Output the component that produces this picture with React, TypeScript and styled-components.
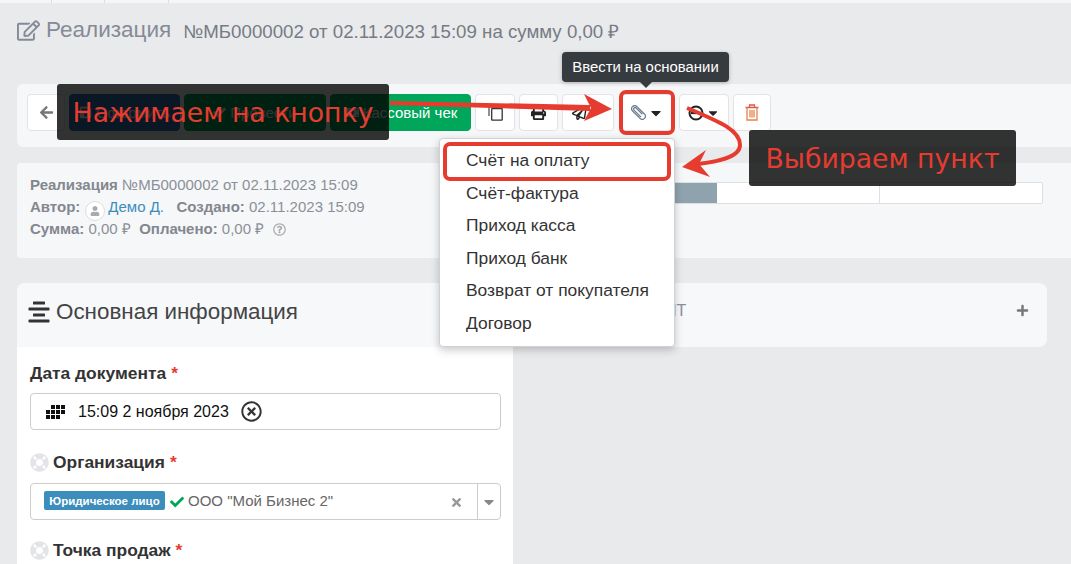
import React from 'react';
import styled, { createGlobalStyle } from 'styled-components';
import {
  FaArrowLeft, FaCaretDown, FaCheck, FaLifeRing, FaPlus, FaPrint, FaRegPaperPlane,
  FaRegEdit, FaRegQuestionCircle, FaRegTimesCircle, FaSave, FaTimes, FaUser, FaAlignCenter, FaMoneyBillAlt,
} from 'react-icons/fa';

const GlobalStyle = createGlobalStyle`
  html, body { margin: 0; padding: 0; background: #e9eaec; }
  body { font-family: "Liberation Sans", Arial, sans-serif; color: #333; }
`;

const Page = styled.div`
  position: relative;
  width: 1071px;
  height: 564px;
  overflow: hidden;
`;

const TopStrip = styled.div`
  display: flex;
  height: 3px;
  background: #f5f6f8;
`;

const TopTab = styled.div<{ $w: number }>`
  width: ${({ $w }) => $w}px;
  border-right: 1px solid #dcdde0;
`;

const Content = styled.div`
  padding-left: 17px;
`;

const Heading = styled.div`
  display: flex;
  align-items: center;
  height: 54px;
  color: #858a96;
  font-size: 22.5px;
  svg { font-size: 23px; margin-right: 6px; }
`;

const HeadingSub = styled.span`
  margin-left: 12px;
  font-size: 18.7px;
  color: #767b84;
`;

const Toolbar = styled.div`
  display: flex;
  align-items: center;
  gap: 4px;
  margin-top: 27px;
  height: 63px;
  padding: 0 0 6px 10px;
  box-sizing: border-box;
  background: #f6f7f9;
  border-radius: 6px 0 0 6px;
`;

const ToolButton = styled.div<{ $w: number; $bg?: string; $gap?: number }>`
  display: flex;
  align-items: center;
  justify-content: center;
  gap: ${({ $gap }) => $gap ?? 4}px;
  width: ${({ $w }) => $w}px;
  height: 37px;
  box-sizing: border-box;
  border-radius: 4px;
  font-size: 15px;
  background: ${({ $bg }) => $bg ?? '#fff'};
  color: ${({ $bg }) => ($bg ? '#fff' : '#444')};
  border: 1px solid ${({ $bg }) => $bg ?? '#e2e3e6'};
`;

const ClipHolder = styled.div`
  position: relative;
  margin-left: 1px;
`;

const RedFrame = styled.div<{ $inset: string }>`
  position: absolute;
  inset: ${({ $inset }) => $inset};
  border: 4px solid #e63c30;
  border-radius: 7px;
  pointer-events: none;
`;

const MenuFrame = styled(RedFrame)`
  height: 39px;
  box-sizing: border-box;
`;

const Tooltip = styled.div`
  position: absolute;
  left: -57px;
  top: -42px;
  width: 167px;
  height: 30px;
  display: flex;
  align-items: center;
  justify-content: center;
  background: #363b40;
  border-radius: 4px;
  color: #fff;
  font-size: 14.9px;
  box-shadow: 0 1px 4px rgba(0, 0, 0, 0.25);

  &::after {
    content: '';
    position: absolute;
    left: 78px;
    bottom: -6px;
    border: 6px solid transparent;
    border-bottom: 0;
    border-top-color: #363b40;
  }
`;

const Menu = styled.div`
  position: absolute;
  left: -180px;
  top: 44px;
  width: 236px;
  height: 209px;
  padding: 5px 0;
  box-sizing: border-box;
  background: #fff;
  border: 1px solid #d0d1d4;
  border-radius: 4px;
  box-shadow: 0 3px 8px rgba(0, 0, 0, 0.22);
  z-index: 2;
`;

const MenuItem = styled.div`
  height: 32.6px;
  line-height: 33px;
  padding-left: 26px;
  font-size: 17.4px;
  color: #333;
`;

const InfoPanel = styled.div`
  display: flex;
  justify-content: space-between;
  margin-top: 16px;
  height: 95px;
  padding: 11px 28px 0 13px;
  box-sizing: border-box;
  background: #f6f7f9;
  border-radius: 4px 0 0 4px;
`;

const InfoLine = styled.div`
  height: 22px;
  line-height: 22px;
  font-size: 15px;
  color: #8b9097;
  white-space: pre;
  b { color: #83878e; }
  a { color: #3c8dbc; }
  svg { vertical-align: -2px; }
`;

const Avatar = styled.span`
  display: inline-flex;
  align-items: center;
  justify-content: center;
  vertical-align: -4px;
  width: 18px;
  height: 18px;
  margin: 0 3px 0 5px;
  border-radius: 50%;
  background: #fff;
  border: 1px solid #ddd;
  color: #aaa;
  font-size: 10px;
`;

const Progress = styled.div`
  display: flex;
  width: 487px;
  height: 20px;
  margin-top: 8px;
  background: #fff;
  border: 1px solid #dedfe2;
  border-radius: 2px;
`;

const ProgressPart = styled.div<{ $fill?: boolean; $line?: boolean }>`
  flex: 1;
  background: ${({ $fill }) => ($fill ? '#8fa3ae' : 'transparent')};
  border-right: ${({ $line }) => ($line ? '1px solid #dedfe2' : '0')};
`;

const Columns = styled.div`
  display: flex;
  align-items: flex-start;
  gap: 14px;
  margin-top: 25px;
`;

const FormCard = styled.div`
  width: 496px;
  height: 300px;
  background: #fff;
  border-radius: 8px 8px 0 0;
  overflow: hidden;
`;

const CardHead = styled.div`
  display: flex;
  align-items: center;
  height: 64px;
  padding: 0 10px 7px;
  box-sizing: border-box;
  background: #f6f8fa;
  font-size: 22.4px;
  color: #444;
  svg { font-size: 24px; margin-right: 5px; color: #333; }
`;

const SideCard = styled.div`
  display: flex;
  align-items: center;
  justify-content: space-between;
  width: 520px;
  height: 64px;
  padding: 0 18px 9px 71px;
  box-sizing: border-box;
  background: #f6f8fa;
  border-radius: 8px;
  color: #8a8f99;
  font-size: 16px;
  svg { font-size: 13px; color: #777; }
`;

const FormBody = styled.div`
  padding: 14px 13px 0;
`;

const FieldLabel = styled.div`
  display: flex;
  align-items: center;
  height: 24px;
  font-size: 17.4px;
  font-weight: bold;
  color: #333;
`;

const Required = styled.span`
  margin-left: 5px;
  color: #e63c30;
`;

const Ring = styled(FaLifeRing)`
  margin-right: 4px;
  font-size: 19px;
  color: #e3e4e8;
`;

const Field = styled.div<{ $top: number; $bottom: number }>`
  display: flex;
  align-items: center;
  width: 471px;
  height: 37px;
  margin: ${({ $top, $bottom }) => `${$top}px 0 ${$bottom}px`};
  box-sizing: border-box;
  border: 1px solid #ccc;
  border-radius: 4px;
  font-size: 16px;
  color: #111;
`;

const DateIcon = styled.svg`
  width: 19px;
  height: 14px;
  margin: 0 13px 0 15px;
  shape-rendering: crispEdges;
`;

const ClearDate = styled(FaRegTimesCircle)`
  margin-left: 12px;
  font-size: 21px;
  color: #333;
`;

const Badge = styled.span`
  display: flex;
  align-items: center;
  justify-content: center;
  width: 121px;
  height: 19px;
  margin: -2px 5px 0 13px;
  background: #3c8dbc;
  border-radius: 2px;
  color: #fff;
  font-size: 11.5px;
  font-weight: bold;
`;

const Company = styled.span`
  flex: 1;
  margin: -2px 0 0 4px;
  font-size: 15px;
  color: #666;
`;

const ClearSelect = styled(FaTimes)`
  margin: 2px 14px 0 0;
  font-size: 13px;
  color: #999;
`;

const SelectArrow = styled.span`
  display: flex;
  align-items: center;
  justify-content: center;
  width: 22px;
  height: 100%;
  border-left: 1px solid #ccc;
  color: #888;
  font-size: 16px;
`;

const Caption = styled.div<{ $x: number; $y: number; $w: number; $h: number }>`
  position: absolute;
  left: ${({ $x }) => $x}px;
  top: ${({ $y }) => $y}px;
  width: ${({ $w }) => $w}px;
  height: ${({ $h }) => $h}px;
  display: flex;
  align-items: center;
  justify-content: center;
  background: rgba(0, 0, 0, 0.8);
  border-radius: 3px;
  color: #e63c30;
  font-family: "DejaVu Sans", sans-serif;
  font-size: 26.7px;
  z-index: 3;
  white-space: nowrap;
`;

const Arrows = styled.svg`
  position: absolute;
  left: 0;
  top: 0;
  z-index: 4;
  pointer-events: none;
`;

const menuItems = ['Счёт на оплату', 'Счёт-фактура', 'Приход касса', 'Приход банк', 'Возврат от покупателя', 'Договор'];

const CopyIcon = () => (
  <svg width="15" height="16" viewBox="0 0 15 16" fill="none" stroke="#333" strokeWidth="1.3">
    <path d="M1 11 V1 H10" stroke="#555" />
    <rect x="3.7" y="3.7" width="10.5" height="11.5" rx="0.5" />
  </svg>
);

const ClipIcon = () => (
  <svg width="15" height="15" viewBox="0 0 17 17" fill="none" stroke="#6a7d94" strokeWidth="1.4">
    <g transform="rotate(-45 8.5 8.5)">
      <rect x="5" y="-1" width="7" height="19" rx="3.5" />
      <path d="M6.8 14 V3 a1.7 1.7 0 0 1 3.4 0 V13" />
    </g>
  </svg>
);

const RingBarIcon = () => (
  <svg width="16" height="16" viewBox="0 0 16 16" fill="none" stroke="#222">
    <circle cx="8" cy="8" r="6.5" strokeWidth="2" />
    <path d="M3 8 H13" strokeWidth="2.2" />
  </svg>
);

const TrashIcon = () => (
  <svg width="14" height="17" viewBox="0 0 14 17" fill="none" stroke="#e8834a" strokeWidth="1.3">
    <path d="M0.5 3.5 H13.5 M4.5 3.5 V1 H9.5 V3.5" stroke="#e0564a" />
    <path d="M2 3.5 V16 H12 V3.5" />
    <path d="M5 6 V13.5 M7 6 V13.5 M9 6 V13.5" />
  </svg>
);

export default function App() {
  return (
    <Page>
      <GlobalStyle />
      <TopStrip>
        <TopTab $w={51} />
        <TopTab $w={52} />
        <TopTab $w={63} />
      </TopStrip>
      <Content>
        <Heading>
          <FaRegEdit />
          Реализация
          <HeadingSub>№МБ0000002 от 02.11.2023 15:09 на сумму 0,00 ₽</HeadingSub>
        </Heading>

        <Toolbar>
          <ToolButton $w={38}><FaArrowLeft color="#777" size={15} /></ToolButton>
          <ToolButton $w={111} $bg="#337ab7"><FaSave size={13} />Оформить</ToolButton>
          <ToolButton $w={142} $bg="#00a65a"><FaCheck size={13} />Провести</ToolButton>
          <ToolButton $w={141} $bg="#00a65a"><FaMoneyBillAlt size={15} />Кассовый чек</ToolButton>
          <ToolButton $w={40}><CopyIcon /></ToolButton>
          <ToolButton $w={39}><FaPrint size={15} color="#222" /></ToolButton>
          <ToolButton $w={52}><FaRegPaperPlane size={15} color="#222" /><FaCaretDown size={13} /></ToolButton>
          <ClipHolder>
            <ToolButton $w={56} $gap={2}><ClipIcon /><FaCaretDown size={16} color="#222" /></ToolButton>
            <RedFrame $inset="-4px 0 -4px 0" />
            <Tooltip>Ввести на основании</Tooltip>
            <Menu>
              {menuItems.map((item) => <MenuItem key={item}>{item}</MenuItem>)}
              <MenuFrame $inset="3px 3px auto 3px" />
            </Menu>
          </ClipHolder>
          <ToolButton $w={50} $gap={2}><RingBarIcon /><FaCaretDown size={14} color="#222" /></ToolButton>
          <ToolButton $w={38}><TrashIcon /></ToolButton>
        </Toolbar>

        <InfoPanel>
          <div>
            <InfoLine><b>Реализация</b> №МБ0000002 от 02.11.2023 15:09</InfoLine>
            <InfoLine>
              <b>Автор:</b><Avatar><FaUser /></Avatar><a>Демо Д.</a>{'   '}<b>Создано:</b> 02.11.2023 15:09
            </InfoLine>
            <InfoLine>
              <b>Сумма:</b> 0,00 ₽  <b>Оплачено:</b> 0,00 ₽  <FaRegQuestionCircle size={13} color="#aaa" />
            </InfoLine>
          </div>
          <Progress>
            <ProgressPart $fill />
            <ProgressPart $line />
            <ProgressPart />
          </Progress>
        </InfoPanel>

        <Columns>
          <FormCard>
            <CardHead><FaAlignCenter />Основная информация</CardHead>
            <FormBody>
              <FieldLabel>Дата документа<Required>*</Required></FieldLabel>
              <Field $top={8} $bottom={20}>
                <DateIcon viewBox="0 0 19 14" fill="#111">
                  <rect x="5" y="0" width="4" height="4" /><rect x="10" y="0" width="4" height="4" /><rect x="15" y="0" width="4" height="4" />
                  <rect x="0" y="5" width="4" height="4" /><rect x="5" y="5" width="4" height="4" /><rect x="10" y="5" width="4" height="4" /><rect x="15" y="5" width="4" height="4" />
                  <rect x="0" y="10" width="4" height="4" /><rect x="5" y="10" width="4" height="4" /><rect x="10" y="10" width="4" height="4" />
                </DateIcon>
                15:09 2 ноября 2023
                <ClearDate />
              </Field>
              <FieldLabel><Ring />Организация<Required>*</Required></FieldLabel>
              <Field $top={9} $bottom={18}>
                <Badge>Юридическое лицо</Badge>
                <FaCheck size={14} color="#00a65a" />
                <Company>ООО "Мой Бизнес 2"</Company>
                <ClearSelect />
                <SelectArrow><FaCaretDown /></SelectArrow>
              </Field>
              <FieldLabel><Ring />Точка продаж<Required>*</Required></FieldLabel>
            </FormBody>
          </FormCard>
          <SideCard>ДОКУМЕНТ<FaPlus /></SideCard>
        </Columns>
      </Content>

      <Caption $x={57} $y={84} $w={332} $h={56}>Нажимаем на кнопку</Caption>
      <Caption $x={749} $y={130} $w={267} $h={56}>Выбираем пункт</Caption>

      <Arrows width={1071} height={564} viewBox="0 0 1071 564">
        <path d="M390 101 L590 105 L590 111 L390 105 Z" fill="#e63c30" />
        <path d="M612 109 L584 94 L591 108 L584 121 Z" fill="#e63c30" />
        <path d="M687 108 C720 122 740 130 740 145 C740 158 715 162 698 164" fill="none" stroke="#e63c30" strokeWidth="4" />
        <path d="M682 167 L706 150 L699 164 L710 177 Z" fill="#e63c30" />
      </Arrows>
    </Page>
  );
}
